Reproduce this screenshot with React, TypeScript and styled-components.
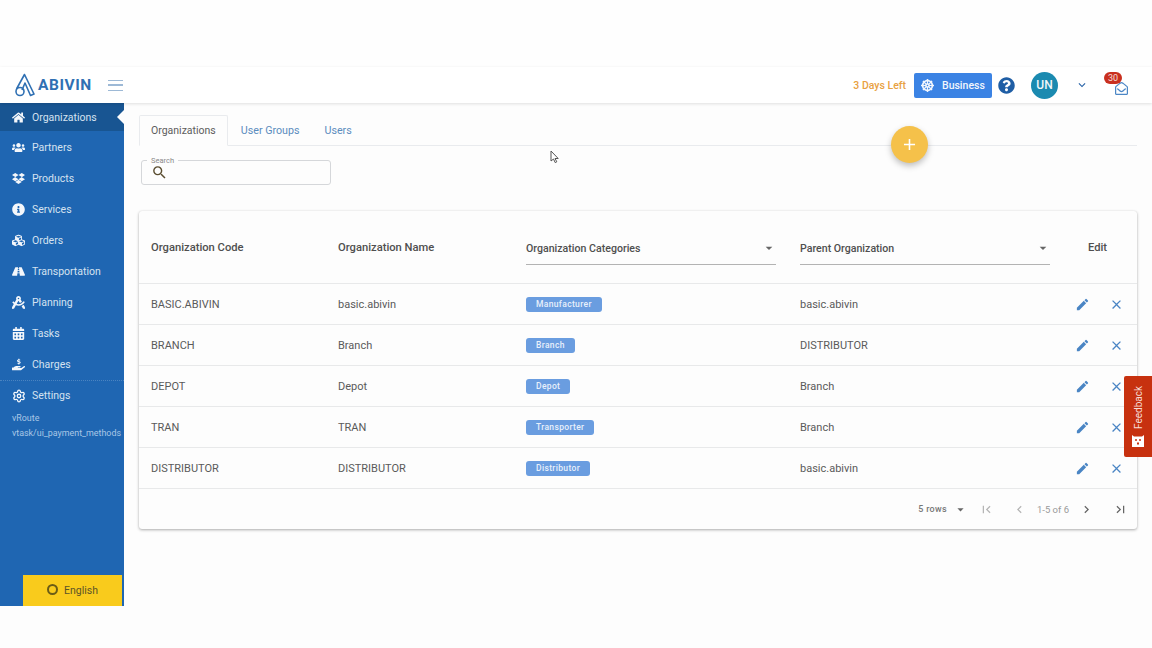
import React from "react";
import styled, { createGlobalStyle } from "styled-components";
import {
  FaHome, FaUsers, FaDropbox, FaInfoCircle, FaCubes, FaRoad, FaDraftingCompass,
  FaCalendarAlt, FaHandHoldingUsd, FaQuestionCircle, FaDharmachakra, FaRegEnvelopeOpen,
} from "react-icons/fa";
import { Settings } from "lucide-react";
import { MdSearch, MdEdit, MdClose, MdFirstPage, MdLastPage, MdChevronLeft, MdChevronRight, MdExpandMore, MdArrowDropDown, MdAdd } from "react-icons/md";

const Global = createGlobalStyle`
  html, body { margin: 0; padding: 0; background: #fdfdfd; }
  body { font-family: Roboto, "Liberation Sans", sans-serif; overflow: hidden; }
`;

const Page = styled.div`
  position: relative; width: 1152px; height: 648px; overflow: hidden;
  display: flex; flex-direction: column; background: #fdfdfd;
`;
const TopGap = styled.div`height: 67px; flex: none; background: #fefefe;`;
const BottomGap = styled.div`height: 42px; flex: none; background: #fdfdfd;`;
const Header = styled.header`
  height: 36px; flex: none; display: flex; align-items: center; background: #fff;
  box-shadow: 0 1px 3px rgba(0,0,0,.12); position: relative; z-index: 2;
`;
const Brand = styled.div`
  width: 124px; display: flex; align-items: center; padding-left: 14px; box-sizing: border-box;
`;
const BrandName = styled.span`
  font: 700 15.5px Roboto, sans-serif; color: #2f70b3; letter-spacing: .55px; margin-left: 2px;
`;
const Burger = styled.div`
  margin-left: 16px; width: 15px; height: 11px; flex: none;
  border-top: 1.5px solid #9db9d6; border-bottom: 1.5px solid #9db9d6; position: relative; box-sizing: border-box;
  &::after { content: ""; position: absolute; left: 0; right: 0; top: 3.5px; height: 1.5px; background: #9db9d6; }
`;
const Right = styled.div`margin-left: auto; display: flex; align-items: center; padding-right: 24px;`;
const Days = styled.span`font: 500 10.5px Roboto, sans-serif; color: #e8a13f; margin-right: 8px;`;
const BizButton = styled.div`
  width: 78px; height: 25px; background: #3b83e4; border-radius: 2px; color: #f2f6fd;
  display: flex; align-items: center; padding-left: 7px; box-sizing: border-box; gap: 8px;
  font: 500 10.5px Roboto, sans-serif;
`;
const Help = styled.div`display: flex; margin-left: 6px; color: #1f5ea5; font-size: 17px;`;
const Avatar = styled.div`
  width: 27px; height: 27px; border-radius: 50%; background: #1b8ab0; color: #f0f7fa;
  display: flex; align-items: center; justify-content: center; font: 500 12px Roboto, sans-serif; margin-left: 16px;
`;
const Caret = styled.div`display: flex; margin-left: 17px; color: #2a64a8; font-size: 14px;`;
const Mail = styled.div`position: relative; margin-left: 21px; width: 18px; height: 20px; color: #4c87c6; font-size: 13px; display: flex; align-items: flex-end; justify-content: flex-end;`;
const Badge = styled.span`
  position: absolute; left: -6px; top: -3px; width: 18px; height: 12px; border-radius: 6px; background: #c9301f;
  color: #f6dedb; font: 400 9px/12px Roboto, sans-serif; text-align: center;
`;

const Body = styled.div`flex: 1; display: flex; min-height: 0;`;
const Side = styled.aside`
  width: 124px; flex: none; background: #1f66b2; position: relative; display: flex; flex-direction: column; color: #d5e2f0;
`;
const NavItem = styled.div<{ $active?: boolean; $h?: number }>`
  height: ${(p) => p.$h ?? 31}px; display: flex; align-items: center; flex: none;
  background: ${(p) => (p.$active ? "#185592" : "transparent")};
  font: 400 10.5px Roboto, sans-serif; padding-left: 12px; position: relative;
  ${(p) => p.$active && `&::after { content: ""; position: absolute; right: 0; top: 50%; margin-top: -7px;
    border: 7px solid transparent; border-right-color: #fdfdfd; border-left: 0; }`}
`;
const NavIcon = styled.span`width: 20px; display: flex; font-size: 13px; color: #f4f7fb;`;
const SideDivider = styled.div`border-top: 1px dotted rgba(255,255,255,.2);`;
const SideNote = styled.div`font: 400 8.9px/15px Roboto, sans-serif; color: #a9c6e6; padding-left: 12px; white-space: nowrap;`;
const SideNotes = styled.div`margin-top: 1px; display: flex; flex-direction: column;`;
const Lang = styled.div`
  margin-top: auto; margin-left: 23px; margin-right: 2px; height: 31px; background: #f9cb1c; color: #5c5428;
  display: flex; align-items: center; justify-content: center; gap: 6px; font: 400 10.5px Roboto, sans-serif;
`;
const Ring = styled.span`width: 7px; height: 7px; border: 2.5px solid #6b5c16; border-radius: 50%; display: block; margin-top: -3px;`;

const Main = styled.main`flex: 1; padding: 12px 15px 0 15px; min-width: 0;`;
const Tabs = styled.div`display: flex; border-bottom: 1px solid #e9ebee; height: 31px; box-sizing: border-box;`;
const Tab = styled.div<{ $active?: boolean }>`
  height: 31px; box-sizing: border-box; padding: ${(p) => (p.$active ? "0 11px" : "0 12px 0 13px")}; display: flex; align-items: center;
  font: 400 ${(p) => (p.$active ? 10.5 : 10.7)}px Roboto, sans-serif; color: ${(p) => (p.$active ? "#5c5c5c" : "#5b8cbe")};
  ${(p) => p.$active && `border: 1px solid #e9ebee; border-bottom-color: #fdfdfd; border-radius: 2px 2px 0 0; background: #fdfdfd;`}
`;
const SearchBox = styled.div`
  position: relative; width: 190px; height: 25px; margin: 14px 0 26px 2px; box-sizing: border-box;
  border: 1px solid #d5d7da; border-radius: 3px; display: flex; align-items: center; padding-left: 9px; color: #5a4d30; font-size: 17px;
`;
const SearchLabel = styled.span`
  position: absolute; left: 5px; top: -5px; padding: 0 4px; background: #fdfdfd; color: #8a8a8a; font: 400 7.5px/9px Roboto, sans-serif;
`;
const Card = styled.section`
  height: 318px; background: #fdfdfd; border-radius: 3px; display: flex; flex-direction: column;
  box-shadow: 0 1px 3px rgba(0,0,0,.32), 0 0 1px rgba(0,0,0,.1);
`;
const Grid = `display: grid; grid-template-columns: 187px 188px 274px 262px 1fr; padding-left: 12px; align-items: center;`;
const HeadRow = styled.div`
  ${Grid} height: 73px; box-sizing: border-box; border-bottom: 1px solid #e8e9ea; flex: none;
  font: 500 11.2px Roboto, sans-serif; color: #4f4f4f;
`;
const FilterHead = styled.div`
  width: 250px; height: 33px; box-sizing: border-box; border-bottom: 1px solid #b3b3b3; display: flex; align-items: center; justify-content: space-between;
  font-size: 10.6px; color: #4f4f4f; padding-top: 1px; margin-top: 2px;
`;
const CaretBox = styled.span`display: flex; font-size: 16px; color: #666; margin-right: -1px;`;
const EditHead = styled.div`padding-left: 26px;`;
const Row = styled.div`
  ${Grid} height: 41px; box-sizing: border-box; border-bottom: 1px solid #e8e9ea; flex: none;
  font: 400 11px Roboto, sans-serif; color: #5a5a5a;
`;
const Tag = styled.span`
  display: inline-block; height: 15px; padding: 0 10px; border-radius: 3px; background: #6a9de0; color: #e8f0fb;
  font: 500 8.5px/15px Roboto, sans-serif; letter-spacing: .35px;
`;
const Actions = styled.div`display: flex; align-items: center; padding-left: 13px; gap: 19px; color: #4a85c4; font-size: 15px;`;
const ActionIcon = styled.span`display: flex;`;
const Foot = styled.div`
  flex: 1; display: flex; align-items: center; justify-content: flex-end; padding-right: 9px;
  font: 400 9.5px Roboto, sans-serif; color: #777;
`;
const Rows = styled.span`margin-right: 6px; font-size: 9px; font-weight: 500; letter-spacing: .3px;`;
const Pg = styled.span<{ $off?: boolean; $mr: number }>`
  display: flex; font-size: 15px; margin-right: ${(p) => p.$mr}px; color: ${(p) => (p.$off ? "#b5b5b5" : "#666")};
`;
const Range = styled.span`margin-right: 10px; color: #9a9a9a;`;

const Fab = styled.div`
  position: absolute; left: 891px; top: 126px; width: 37px; height: 37px; border-radius: 50%; background: #f5c14a; color: #fff;
  display: flex; align-items: center; justify-content: center; font-size: 19px; box-shadow: 0 3px 6px rgba(0,0,0,.25); z-index: 3;
`;
const Feedback = styled.div`
  position: absolute; left: 1124px; top: 376px; width: 28px; height: 81px; background: #c7310f; color: #f6dcd5;
  border-radius: 2px 0 0 2px; display: flex; flex-direction: column; align-items: center; justify-content: flex-end; padding-bottom: 10px; box-sizing: border-box; gap: 6px; z-index: 3;
`;
const FeedbackText = styled.span`
  writing-mode: vertical-rl; transform: rotate(180deg); font: 400 10px Roboto, sans-serif;
`;
const Cursor = styled.svg`position: absolute; left: 550px; top: 150px; z-index: 3;`;

const nav = [
  { label: "Partners", icon: <FaUsers /> },
  { label: "Products", icon: <FaDropbox /> },
  { label: "Services", icon: <FaInfoCircle /> },
  { label: "Orders", icon: <FaCubes /> },
  { label: "Transportation", icon: <FaRoad /> },
  { label: "Planning", icon: <FaDraftingCompass /> },
  { label: "Tasks", icon: <FaCalendarAlt /> },
  { label: "Charges", icon: <FaHandHoldingUsd /> },
];

const rows = [
  ["BASIC.ABIVIN", "basic.abivin", "Manufacturer", "basic.abivin"],
  ["BRANCH", "Branch", "Branch", "DISTRIBUTOR"],
  ["DEPOT", "Depot", "Depot", "Branch"],
  ["TRAN", "TRAN", "Transporter", "Branch"],
  ["DISTRIBUTOR", "DISTRIBUTOR", "Distributor", "basic.abivin"],
];

const Logo = () => (
  <svg width="22" height="24" viewBox="0 0 22 24" fill="none" stroke="#2f70b3" strokeWidth="1.6">
    <path d="M2.5 16 L10.5 1.5 L20 21 L16.5 22.5 L11 10 L8 17" strokeLinejoin="round" />
    <circle cx="6" cy="18.5" r="4" />
  </svg>
);

export default function App() {
  return (
    <Page>
      <Global />
      <TopGap />
      <Header>
        <Brand>
          <Logo />
          <BrandName>ABIVIN</BrandName>
          <Burger />
        </Brand>
        <Right>
          <Days>3 Days Left</Days>
          <BizButton><FaDharmachakra size={13} /> Business</BizButton>
          <Help><FaQuestionCircle /></Help>
          <Avatar>UN</Avatar>
          <Caret><MdExpandMore /></Caret>
          <Mail><FaRegEnvelopeOpen /><Badge>30</Badge></Mail>
        </Right>
      </Header>
      <Body>
        <Side>
          <NavItem $active $h={28}><NavIcon><FaHome /></NavIcon>Organizations</NavItem>
          {nav.map((n, i) => (
            <NavItem key={n.label} $h={i === 0 ? 32 : 31}><NavIcon>{n.icon}</NavIcon>{n.label}</NavItem>
          ))}
          <SideDivider />
          <NavItem $h={29}><NavIcon><Settings size={14} strokeWidth={2.2} /></NavIcon>Settings</NavItem>
          <SideNotes>
            <SideNote>vRoute</SideNote>
            <SideNote>vtask/ui_payment_methods</SideNote>
          </SideNotes>
          <Lang><Ring />English</Lang>
        </Side>
        <Main>
          <Tabs>
            <Tab $active>Organizations</Tab>
            <Tab>User Groups</Tab>
            <Tab>Users</Tab>
          </Tabs>
          <SearchBox>
            <SearchLabel>Search</SearchLabel>
            <MdSearch />
          </SearchBox>
          <Card>
            <HeadRow>
              <div>Organization Code</div>
              <div>Organization Name</div>
              <FilterHead>Organization Categories<CaretBox><MdArrowDropDown /></CaretBox></FilterHead>
              <FilterHead>Parent Organization<CaretBox><MdArrowDropDown /></CaretBox></FilterHead>
              <EditHead>Edit</EditHead>
            </HeadRow>
            {rows.map((r) => (
              <Row key={r[0]}>
                <div>{r[0]}</div>
                <div>{r[1]}</div>
                <div><Tag>{r[2]}</Tag></div>
                <div>{r[3]}</div>
                <Actions>
                  <ActionIcon><MdEdit /></ActionIcon>
                  <ActionIcon><MdClose /></ActionIcon>
                </Actions>
              </Row>
            ))}
            <Foot>
              <Rows>5 rows</Rows>
              <Pg $mr={11}><MdArrowDropDown /></Pg>
              <Pg $off $mr={18}><MdFirstPage /></Pg>
              <Pg $off $mr={10}><MdChevronLeft /></Pg>
              <Range>1-5 of 6</Range>
              <Pg $mr={19}><MdChevronRight /></Pg>
              <Pg $mr={0}><MdLastPage /></Pg>
            </Foot>
          </Card>
        </Main>
      </Body>
      <BottomGap />
      <Fab><MdAdd /></Fab>
      <Feedback>
        <FeedbackText>Feedback</FeedbackText>
        <svg width="14" height="12" viewBox="0 0 14 12"><path d="M1 0l2 1.5h8L13 0v12H1z" fill="#fff" /><circle cx="5" cy="5" r="1" fill="#c7310f" /><circle cx="9" cy="5" r="1" fill="#c7310f" /><path d="M6 7.5h2v2H6z" fill="#c7310f" /></svg>
      </Feedback>
      <Cursor width="10" height="14" viewBox="0 0 10 14"><path d="M1 1v10l2.5-2 1.7 3.6 1.6-.8L5 8.5h3.2z" fill="#fff" stroke="#555" strokeWidth="1" /></Cursor>
    </Page>
  );
}
